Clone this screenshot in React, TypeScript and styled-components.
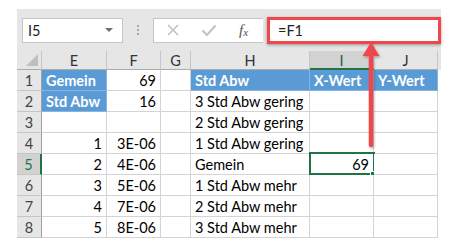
import * as React from 'react';
import styled, { createGlobalStyle, css } from 'styled-components';

const GlobalStyle = createGlobalStyle`
  html, body {
    margin: 0;
    padding: 0;
    background: #ffffff;
  }
  body {
    font-family: Lato, 'Open Sans', sans-serif;
  }
`;

type CellData = {
  text?: string;
  num?: boolean;
  blue?: boolean;
  selected?: boolean;
};

const columns = ['E', 'F', 'G', 'H', 'I', 'J'];
const activeColumn = 'I';
const activeRow = 5;

const rows: CellData[][] = [
  [{ text: 'Gemein', blue: true }, { text: '69', num: true }, {}, { text: 'Std Abw', blue: true }, { text: 'X-Wert', blue: true }, { text: 'Y-Wert', blue: true }],
  [{ text: 'Std Abw', blue: true }, { text: '16', num: true }, {}, { text: '3 Std Abw gering' }, {}, {}],
  [{}, {}, {}, { text: '2 Std Abw gering' }, {}, {}],
  [{ text: '1', num: true }, { text: '3E-06', num: true }, {}, { text: '1 Std Abw gering' }, {}, {}],
  [{ text: '2', num: true }, { text: '4E-06', num: true }, {}, { text: 'Gemein' }, { text: '69', num: true, selected: true }, {}],
  [{ text: '3', num: true }, { text: '5E-06', num: true }, {}, { text: '1 Std Abw mehr' }, {}, {}],
  [{ text: '4', num: true }, { text: '7E-06', num: true }, {}, { text: '2 Std Abw mehr' }, {}, {}],
  [{ text: '5', num: true }, { text: '8E-06', num: true }, {}, { text: '3 Std Abw mehr' }, {}, {}],
];

export default function App() {
  return (
    <>
      <GlobalStyle />
      <Frame>
        <Toolbar>
          <NameBox>
            <span>I5</span>
            <Caret />
          </NameBox>
          <Dots>
            <i />
            <i />
            <i />
          </Dots>
          <FormulaButtons>
            <ToolIcon>
              <svg width="14" height="14" viewBox="0 0 14 14">
                <path d="M2 2 L12 12 M12 2 L2 12" stroke="#c3c3c3" strokeWidth="1.6" fill="none" />
              </svg>
            </ToolIcon>
            <ToolIcon>
              <svg width="16" height="14" viewBox="0 0 16 14">
                <path d="M1.5 7.5 L6 12 L14.5 2.5" stroke="#c3c3c3" strokeWidth="2.2" fill="none" />
              </svg>
            </ToolIcon>
            <FxLabel>
              f<sub>x</sub>
            </FxLabel>
          </FormulaButtons>
          <FormulaInput>=F1</FormulaInput>
        </Toolbar>
        <Sheet>
          <CornerCell>
            <CornerTriangle />
          </CornerCell>
          {columns.map(c => (
            <ColHeader key={c} $active={c === activeColumn}>
              {c}
            </ColHeader>
          ))}
          <HeaderFiller />
          {rows.map((row, r) => (
            <React.Fragment key={r}>
              <RowHeader $active={r + 1 === activeRow}>{r + 1}</RowHeader>
              {row.map((cell, c) => (
                <Cell key={c} $num={cell.num} $blue={cell.blue} $selected={cell.selected}>
                  {cell.text}
                </Cell>
              ))}
              <BodyFiller />
            </React.Fragment>
          ))}
        </Sheet>
        <Arrow width="30" height="120" viewBox="0 0 30 120">
          <defs>
            <filter id="sh" x="-50%" y="-20%" width="200%" height="140%">
              <feDropShadow dx="1" dy="1.5" stdDeviation="1.2" floodColor="#000" floodOpacity="0.3" />
            </filter>
          </defs>
          <g filter="url(#sh)">
            <line x1="15" y1="14" x2="15" y2="104" stroke="#f0474d" strokeWidth="4.5" strokeLinecap="round" />
            <path d="M15 1 L23.5 15 L6.5 15 Z" fill="#f0474d" />
          </g>
        </Arrow>
      </Frame>
    </>
  );
}

const Frame = styled.div`
  position: relative;
  margin: 9px 0 0 17px;
  width: 424px;
  background: #e6e6e6;
`;

const Toolbar = styled.div`
  display: flex;
  align-items: center;
  height: 42px;
  padding: 0 0 0 5px;
  box-sizing: border-box;
`;

const NameBox = styled.div`
  display: flex;
  align-items: center;
  justify-content: space-between;
  width: 101px;
  height: 25px;
  box-sizing: border-box;
  border: 1px solid #c6c6c6;
  background: #ffffff;
  padding: 0 9px 0 5px;
  font-size: 14.5px;
  color: #222;
`;

const Caret = styled.span`
  width: 0;
  height: 0;
  border-left: 4px solid transparent;
  border-right: 4px solid transparent;
  border-top: 4px solid #6d6d6d;
`;

const Dots = styled.div`
  display: flex;
  flex-direction: column;
  gap: 2px;
  margin: 0 14px;
  i {
    width: 2px;
    height: 2px;
    background: #a9a9a9;
  }
`;

const FormulaButtons = styled.div`
  display: flex;
  align-items: center;
  width: 110px;
  height: 25px;
  box-sizing: border-box;
  border: 1px solid #c6c6c6;
  border-right: none;
  background: #ffffff;
  padding-left: 11px;
  gap: 20px;
`;

const ToolIcon = styled.span`
  display: flex;
  align-items: center;
  justify-content: center;
  width: 16px;
  height: 16px;
`;

const FxLabel = styled.span`
  font-family: 'Liberation Serif', 'DejaVu Serif', serif;
  font-style: italic;
  font-size: 15px;
  color: #555;
  margin-left: 2px;
  sub {
    font-size: 11px;
    vertical-align: -1px;
  }
`;

const FormulaInput = styled.div`
  display: flex;
  align-items: center;
  width: 174px;
  height: 27px;
  box-sizing: border-box;
  margin-left: 4px;
  margin-right: -1px;
  border: 3px solid #f0474d;
  box-shadow: 0 1px 3px rgba(0, 0, 0, 0.35);
  background: #ffffff;
  padding-left: 8px;
  font-size: 14.5px;
  color: #222;
`;

const Sheet = styled.div`
  display: grid;
  grid-template-columns: 25px 65px 54px 30px 119px 64px 64px 3px;
  grid-template-rows: 19px;
  grid-auto-rows: 21px;
  background: #ffffff;
  font-size: 14.5px;
`;

const headerBase = css`
  display: flex;
  align-items: center;
  justify-content: center;
  box-sizing: border-box;
  background: #e6e6e6;
  color: #444;
  font-size: 14.5px;
`;

const CornerCell = styled.div`
  ${headerBase};
  position: relative;
  border-right: 1px solid #c6c6c6;
  border-bottom: 1px solid #ababab;
`;

const CornerTriangle = styled.span`
  position: absolute;
  right: 3px;
  bottom: 3px;
  width: 0;
  height: 0;
  border-left: 12px solid transparent;
  border-bottom: 12px solid #bfbfbf;
`;

const ColHeader = styled.div<{ $active?: boolean }>`
  ${headerBase};
  border-right: 1px solid #c6c6c6;
  border-bottom: ${p => (p.$active ? '2px solid #217346' : '1px solid #ababab')};
  background: ${p => (p.$active ? '#d2d2d2' : '#e6e6e6')};
  color: ${p => (p.$active ? '#1d5e3a' : '#333')};
  padding-top: ${p => (p.$active ? '1px' : '0')};
`;

const HeaderFiller = styled.div`
  background: #e6e6e6;
`;

const RowHeader = styled.div<{ $active?: boolean }>`
  ${headerBase};
  border-bottom: 1px solid #c6c6c6;
  border-right: ${p => (p.$active ? '2px solid #217346' : '1px solid #9f9f9f')};
  background: ${p => (p.$active ? '#d2d2d2' : '#e6e6e6')};
  color: ${p => (p.$active ? '#217346' : '#444')};
`;

const Cell = styled.div<{ $num?: boolean; $blue?: boolean; $selected?: boolean }>`
  position: relative;
  display: flex;
  align-items: center;
  justify-content: ${p => (p.$num ? 'flex-end' : 'flex-start')};
  box-sizing: border-box;
  padding: 0 4px;
  white-space: nowrap;
  border-right: 1px solid ${p => (p.$blue ? '#86b3e0' : '#d4d4d4')};
  border-bottom: 1px solid ${p => (p.$blue ? '#86b3e0' : '#d4d4d4')};
  background: ${p => (p.$blue ? '#5b9bd5' : '#ffffff')};
  color: ${p => (p.$blue ? '#ffffff' : '#000000')};
  font-weight: ${p => (p.$blue ? 700 : 400)};
  ${p =>
    p.$selected &&
    css`
      &::before {
        content: '';
        position: absolute;
        left: -1px;
        top: -2px;
        right: -2px;
        bottom: -1px;
        border: 2px solid #217346;
      }
      &::after {
        content: '';
        position: absolute;
        right: -4px;
        bottom: -4px;
        width: 5px;
        height: 5px;
        background: #217346;
        border: 1px solid #ffffff;
      }
    `}
`;

const BodyFiller = styled.div`
  background: #ffffff;
`;

const Arrow = styled.svg`
  position: absolute;
  left: 339px;
  top: 32px;
  overflow: visible;
  pointer-events: none;
`;
